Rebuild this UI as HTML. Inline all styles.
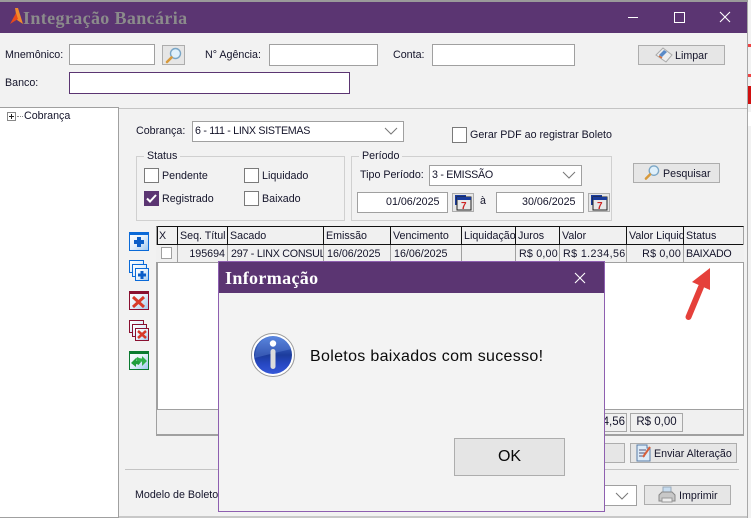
<!DOCTYPE html>
<html><head><meta charset="utf-8">
<style>
html,body{margin:0;padding:0;width:751px;height:518px;overflow:hidden;background:#fff}
body{position:relative;font-family:"Liberation Sans",sans-serif;font-size:10.7px;color:#14142a;}
div,svg{position:absolute;box-sizing:border-box}
.t{white-space:nowrap;line-height:16px;height:16px}
.in{background:#fff;border:1px solid #a0a0a0}
.btn{background:#e6e6e6;border:1px solid #adadad}
.cb{background:#fff;border:1px solid #7a7a7a;width:15px;height:15px}
.c{position:absolute;top:0;height:18px;border-right:1px solid #111;line-height:18px;padding-left:2px;white-space:nowrap;overflow:hidden;box-sizing:border-box}
.r{position:absolute;top:0;height:18px;border-right:1px solid #a0a0a0;line-height:18px;padding:0 2px 0 3px;white-space:nowrap;overflow:hidden;box-sizing:border-box}
</style></head><body>
<!-- background sliver -->
<div style="left:748px;top:0;width:3px;height:518px;background:#f2f2f2"></div>
<div style="left:748px;top:44px;width:3px;height:3px;background:#e44"></div>
<div style="left:748px;top:74px;width:3px;height:3px;background:#e44"></div>
<div style="left:748px;top:86px;width:3px;height:18px;background:#d01010"></div>
<div style="left:748px;top:112px;width:3px;height:14px;background:#fff"></div>
<!-- window -->
<div style="left:0;top:0;width:748px;height:2px;background:#9a9a9a"></div>
<div style="left:0;top:2px;width:748px;height:516px;background:#f2f2f2"></div>
<div style="left:747px;top:2px;width:1px;height:516px;background:#a8a8a8"></div>
<div style="left:0;top:2px;width:747px;height:31px;background:#5b3572"></div>
<svg style="left:9px;top:7px" width="15" height="18" viewBox="0 0 15 18"><path d="M6 1L9 1L14 17L8 13Z" fill="#f08a2c"/><path d="M7 6L9 12L1 17Z" fill="#e8481c"/></svg>
<div class="t" style="left:23px;top:8px;height:20px;font:bold 18px/20px 'Liberation Serif',serif;letter-spacing:.37px;color:#8b8b8b">Integração Bancária</div>
<div style="left:628px;top:17px;width:10px;height:1px;background:#fff"></div>
<div style="left:674px;top:12px;width:11px;height:11px;border:1px solid #fff"></div>
<svg style="left:719px;top:11px" width="12" height="12" viewBox="0 0 12 12"><path d="M1 1L11 11M11 1L1 11" stroke="#fff" stroke-width="1.1" fill="none"/></svg>

<!-- top form -->
<div class="t" style="left:5px;top:47px">Mnemônico:</div>
<div class="in" style="left:69px;top:44px;width:86px;height:21px"></div>
<div class="btn" style="left:162px;top:45px;width:23px;height:20px"></div>
<svg style="left:165px;top:47px" width="17" height="17" viewBox="0 0 17 17"><circle cx="10.5" cy="6.5" r="5" fill="#dff0fb" stroke="#7aa6c6" stroke-width="1.4"/><path d="M6.500 10.500L2 15" stroke="#d89a3c" stroke-width="2.600" stroke-linecap="round"/></svg>
<div class="t" style="left:205px;top:47px">N° Agência:</div>
<div class="in" style="left:269px;top:44px;width:109px;height:22px"></div>
<div class="t" style="left:393px;top:47px">Conta:</div>
<div class="in" style="left:432px;top:44px;width:143px;height:22px"></div>
<div class="btn" style="left:638px;top:45px;width:87px;height:20px"></div>
<svg style="left:655px;top:47px" width="18" height="16" viewBox="0 0 18 16"><path d="M1 8L8 1L17 8L11 15Z" fill="#eee" stroke="#aaa"/><path d="M4 8L9 3L12 5L7 10Z" fill="#5a8ac8"/><path d="M4 9L7 11" stroke="#d8703c" stroke-width="1.500"/></svg>
<div class="t" style="left:675px;top:48px">Limpar</div>
<div class="t" style="left:5px;top:75px">Banco:</div>
<div style="left:69px;top:72px;width:281px;height:22px;background:#fff;border:1px solid #5b3572"></div>

<!-- tree -->
<div style="left:0;top:107px;width:119px;height:411px;background:#fff;border-top:1px solid #a0a0a0;border-right:1px solid #a0a0a0;border-bottom:1px solid #a0a0a0"></div>
<div style="left:7px;top:112px;width:9px;height:9px;border:1px solid #888;background:#fff"></div>
<div style="left:9px;top:116px;width:5px;height:1px;background:#222"></div>
<div style="left:11px;top:114px;width:1px;height:5px;background:#222"></div>
<div style="left:17px;top:116px;width:6px;height:1px;border-top:1px dotted #888"></div>
<div class="t" style="left:24px;top:108px">Cobrança</div>

<!-- right panel -->
<div style="left:119px;top:108px;width:628px;height:1px;background:#c4c4c4"></div>
<div class="t" style="left:136px;top:123px">Cobrança:</div>
<div class="in" style="left:192px;top:121px;width:212px;height:21px"></div>
<div class="t" style="left:195px;top:123px;letter-spacing:-.3px">6 - 111 - LINX SISTEMAS</div>
<svg style="left:384px;top:127px" width="14" height="8" viewBox="0 0 14 8"><path d="M1 1L7 7L13 1" stroke="#777" fill="none"/></svg>
<div class="cb" style="left:452px;top:127px;height:16px"></div>
<div class="t" style="left:470px;top:127px">Gerar PDF ao registrar Boleto</div>

<!-- status group -->
<div style="left:136px;top:156px;width:209px;height:65px;border:1px solid #d0d0d0"></div>
<div class="t" style="left:144px;top:148px;background:#f2f2f2;padding:0 3px">Status</div>
<div class="cb" style="left:144px;top:168px"></div>
<div class="t" style="left:162px;top:168px">Pendente</div>
<div class="cb" style="left:244px;top:168px"></div>
<div class="t" style="left:262px;top:168px">Liquidado</div>
<div class="cb" style="left:144px;top:191px;background:#5b3572;border-color:#5b3572"></div>
<svg style="left:144px;top:191px" width="15" height="15" viewBox="0 0 15 15"><path d="M3 7.500L6 10.500L12 4" stroke="#fff" stroke-width="2" fill="none"/></svg>
<div class="t" style="left:162px;top:191px">Registrado</div>
<div class="cb" style="left:244px;top:191px"></div>
<div class="t" style="left:262px;top:191px">Baixado</div>

<!-- periodo group -->
<div style="left:351px;top:156px;width:261px;height:65px;border:1px solid #d0d0d0"></div>
<div class="t" style="left:359px;top:148px;background:#f2f2f2;padding:0 3px">Período</div>
<div class="t" style="left:360px;top:167px">Tipo Período:</div>
<div class="in" style="left:429px;top:165px;width:153px;height:21px"></div>
<div class="t" style="left:432px;top:167px;letter-spacing:-.3px">3 - EMISSÃO</div>
<svg style="left:562px;top:171px" width="14" height="8" viewBox="0 0 14 8"><path d="M1 1L7 7L13 1" stroke="#777" fill="none"/></svg>
<div class="in" style="left:357px;top:192px;width:91px;height:21px"></div>
<div class="t" style="left:386px;top:194px">01/06/2025</div>
<div class="btn" style="left:452px;top:193px;width:22px;height:19px"></div>
<svg style="left:454px;top:194px" width="18" height="17" viewBox="0 0 18 17"><rect x="1" y="1" width="11" height="10" fill="#1a3c9c"/><rect x="3" y="3" width="14" height="13" fill="#e8e8e8" stroke="#222"/><rect x="3" y="3" width="14" height="3" fill="#1a3c9c"/><text x="7" y="15" font-size="10" font-weight="bold" fill="#c22" font-family="Liberation Sans">7</text></svg>
<div class="t" style="left:480px;top:193px">à</div>
<div class="in" style="left:496px;top:192px;width:88px;height:21px"></div>
<div class="t" style="left:522px;top:194px">30/06/2025</div>
<div class="btn" style="left:588px;top:193px;width:22px;height:19px"></div>
<svg style="left:590px;top:194px" width="18" height="17" viewBox="0 0 18 17"><rect x="1" y="1" width="11" height="10" fill="#1a3c9c"/><rect x="3" y="3" width="14" height="13" fill="#e8e8e8" stroke="#222"/><rect x="3" y="3" width="14" height="3" fill="#1a3c9c"/><text x="7" y="15" font-size="10" font-weight="bold" fill="#c22" font-family="Liberation Sans">7</text></svg>
<div class="btn" style="left:633px;top:163px;width:87px;height:20px"></div>
<svg style="left:644px;top:164px" width="16" height="17" viewBox="0 0 17 17"><circle cx="10.500" cy="6.500" r="5" fill="#dff0fb" stroke="#7aa6c6" stroke-width="1.400"/><path d="M6.500 10.500L2 15" stroke="#d89a3c" stroke-width="2.600" stroke-linecap="round"/></svg>
<div class="t" style="left:663px;top:166px">Pesquisar</div>

<!-- side icons -->
<svg style="left:129px;top:231px" width="20" height="142" viewBox="0 0 20 142">
<defs><linearGradient id="g" x1="0" y1="0" x2="1" y2="1"><stop offset="0" stop-color="#fff"/><stop offset=".5" stop-color="#e4f0fb"/><stop offset="1" stop-color="#9cc6ee"/></linearGradient></defs>
<g fill="url(#g)" stroke-width="1">
<rect x=".5" y="1.500" width="19" height="18" stroke="#0a6ad8"/><rect x="0" y="1" width="20" height="3" fill="#0a6ad8" stroke="none"/>
<rect x=".5" y="29.500" width="14" height="12" stroke="#0a6ad8"/><rect x="3.500" y="33.500" width="14" height="12" stroke="#0a6ad8"/><rect x="6.500" y="37.500" width="13" height="12" stroke="#0a6ad8"/>
<rect x=".5" y="60.500" width="19" height="18" stroke="#8a1030"/><rect x="0" y="60" width="20" height="3" fill="#8a1030" stroke="none"/>
<rect x=".5" y="89.500" width="14" height="12" stroke="#8a1030"/><rect x="3.500" y="93.500" width="14" height="12" stroke="#8a1030"/><rect x="6.500" y="97.500" width="13" height="12" stroke="#8a1030"/>
<rect x=".5" y="120.500" width="19" height="18" stroke="#0a7a30"/><rect x="0" y="120" width="20" height="3" fill="#0a7a30" stroke="none"/>
</g>
<path d="M8 6h4v3h3v4h-3v3H8v-3H5V9h3z" fill="#0a5ec8"/>
<path d="M11.500 40h3v2.500h2.500v3h-2.500v2.500h-3v-2.500H9v-3h2.500z" fill="#0a5ec8"/>
<path d="M4 66L15 76M15 66L4 76" stroke="#d83a2a" stroke-width="3"/>
<path d="M9 100L17 107M17 100L9 107" stroke="#d83a2a" stroke-width="2.500"/>
<path d="M2 132L7 127L7 129.500Q10 129 12 131L9.500 134Q8.500 133 7 133.200L7 136Z" fill="#1f9e3c"/>
<path d="M18 130L13 125L13 127.500Q10 127.500 8.500 126L6.500 128Q9 130.800 13 130.800L13 135Z" fill="#2fb04a" transform="translate(0 0)"/>
</svg>

<!-- grid -->
<div style="left:156px;top:226px;width:588px;height:210px;background:#fff;border-top:1px solid #111;border-left:2px solid #a0a0a0;border-right:1px solid #a0a0a0;border-bottom:3px solid #a0a0a0"></div>
<div style="left:157px;top:227px;width:586px;height:18px;background:#f0f0f0;border-left:1px solid #111;border-bottom:1px solid #111;"></div>
<div style="left:156px;top:227px;width:588px;height:18px">
<div class="c" style="left:0;width:22px;padding-left:3px">X</div>
<div class="c" style="left:22px;width:50px">Seq. Títul</div>
<div class="c" style="left:72px;width:96px">Sacado</div>
<div class="c" style="left:168px;width:67px">Emissão</div>
<div class="c" style="left:235px;width:71px">Vencimento</div>
<div class="c" style="left:306px;width:54px">Liquidação</div>
<div class="c" style="left:360px;width:44px">Juros</div>
<div class="c" style="left:404px;width:67px">Valor</div>
<div class="c" style="left:471px;width:57px">Valor Liquid</div>
<div class="c" style="left:528px;width:60px;border-right:none">Status</div>
</div>
<div style="left:156px;top:245px;width:588px;height:18px;background:#f0f0f0;border-bottom:1px solid #a0a0a0">
<div class="r" style="left:0;width:22px"><div class="cb" style="left:5px;top:2px;width:11px;height:12px;border-color:#a0a0a0"></div></div>
<div class="r" style="left:22px;width:50px;text-align:right">195694</div>
<div class="r" style="left:72px;width:96px;letter-spacing:-.25px">297 - LINX CONSUL</div>
<div class="r" style="left:168px;width:67px">16/06/2025</div>
<div class="r" style="left:235px;width:71px">16/06/2025</div>
<div class="r" style="left:306px;width:54px"></div>
<div class="r" style="left:360px;width:44px;text-align:right;letter-spacing:.2px">R$ 0,00</div>
<div class="r" style="left:404px;width:67px;text-align:right;letter-spacing:.4px">R$ 1.234,56</div>
<div class="r" style="left:471px;width:57px;text-align:right;letter-spacing:.2px">R$ 0,00</div>
<div class="r" style="left:528px;width:60px;border-right:none;padding-left:2px;letter-spacing:-.3px">BAIXADO</div>
</div>
<!-- grid footer -->
<div style="left:157px;top:409px;width:586px;height:25px;background:#f0f0f0;border-top:1px solid #a0a0a0"></div>
<div style="left:595px;top:413px;width:32px;height:19px;border:1px solid #a8a8a8;line-height:17px;text-align:right;padding-right:1px;overflow:hidden;font-size:11.500px">4,56</div>
<div style="left:630px;top:413px;width:53px;height:19px;border:1px solid #a8a8a8;line-height:17px;text-align:center;font-size:11.500px">R$ 0,00</div>

<!-- bottom -->
<div class="btn" style="left:590px;top:443px;width:35px;height:20px"></div>
<div class="btn" style="left:630px;top:443px;width:107px;height:20px"></div>
<svg style="left:636px;top:444px" width="16" height="18" viewBox="0 0 16 18"><path d="M1 1H11V4L14 4V17H1Z" fill="#dcebf8" stroke="#5a7ea8"/><path d="M3 6H10M3 9H10M3 12H9" stroke="#557"/><path d="M7 13L14 3" stroke="#d8603c" stroke-width="2"/></svg>
<div class="t" style="left:654px;top:446px">Enviar Alteração</div>
<div style="left:125px;top:469px;width:614px;height:1px;background:#c4c4c4"></div>
<div class="t" style="left:135px;top:487px">Modelo de Boleto</div>
<div class="in" style="left:590px;top:485px;width:47px;height:21px"></div>
<svg style="left:615px;top:492px" width="14" height="8" viewBox="0 0 14 8"><path d="M1 1L7 7L13 1" stroke="#777" fill="none"/></svg>
<div class="btn" style="left:644px;top:485px;width:87px;height:20px"></div>
<svg style="left:658px;top:486px" width="18" height="18" viewBox="0 0 18 18"><path d="M5 1H13V7H5Z" fill="#c8ddf0" stroke="#9ab"/><path d="M1 9L4 6H14L17 9V15H1Z" fill="#c8c8c8" stroke="#888"/><rect x="4" y="12" width="10" height="4" fill="#eee" stroke="#999"/></svg>
<div class="t" style="left:679px;top:488px">Imprimir</div>
<div style="left:119px;top:516px;width:628px;height:2px;background:#c8c8c8"></div>

<!-- arrow -->
<svg style="left:676px;top:264px" width="40" height="62" viewBox="0 0 40 62"><path d="M12.500 53L25 23" stroke="#e5403a" stroke-width="6" stroke-linecap="round"/><path d="M34 4L16 18L34 26Z" fill="#e5403a"/></svg>

<!-- modal -->
<div style="left:218px;top:261px;width:387px;height:251px;background:#f3f3f3;border:1px solid #8e5fb0"></div>
<div style="left:219px;top:262px;width:385px;height:31px;background:#5b3572"></div>
<div class="t" style="left:225px;top:268px;height:20px;font:bold 18px/20px 'Liberation Serif',serif;letter-spacing:.35px;color:#fff">Informação</div>
<svg style="left:574px;top:272px" width="12" height="12" viewBox="0 0 12 12"><path d="M1 1L11 11M11 1L1 11" stroke="#fff" stroke-width="1.100" fill="none"/></svg>
<svg style="left:250px;top:332px" width="46" height="46" viewBox="0 0 46 46">
<defs><linearGradient id="b" x1="0" y1="0" x2="0" y2="1"><stop offset="0" stop-color="#4f7fdc"/><stop offset=".5" stop-color="#1c3c9c"/><stop offset=".75" stop-color="#2748c4"/><stop offset="1" stop-color="#3558d8"/></linearGradient></defs>
<circle cx="23" cy="23" r="21.500" fill="#fff" stroke="#9a9a9a" stroke-width="1"/>
<circle cx="23" cy="23" r="19" fill="url(#b)"/>
<path d="M4.500 26Q20 22 41.500 17Q36 5 23 4.500Q6 6 4.500 26Z" fill="#6f96e4" opacity=".35"/>
<circle cx="23" cy="11.500" r="3.200" fill="#fff"/>
<rect x="20.500" y="17" width="5" height="20" rx="2.500" fill="#dcdcdc"/>
</svg>
<div class="t" style="left:310px;top:348px;height:18px;line-height:18px;font-size:16px;letter-spacing:.32px;color:#0a0a0a">Boletos baixados com sucesso!</div>
<div style="left:454px;top:438px;width:111px;height:38px;background:#e5e5e5;border:1px solid #adadad;font-size:16px;line-height:36px;text-align:center;color:#0a0a0a">OK</div>
</body></html>
